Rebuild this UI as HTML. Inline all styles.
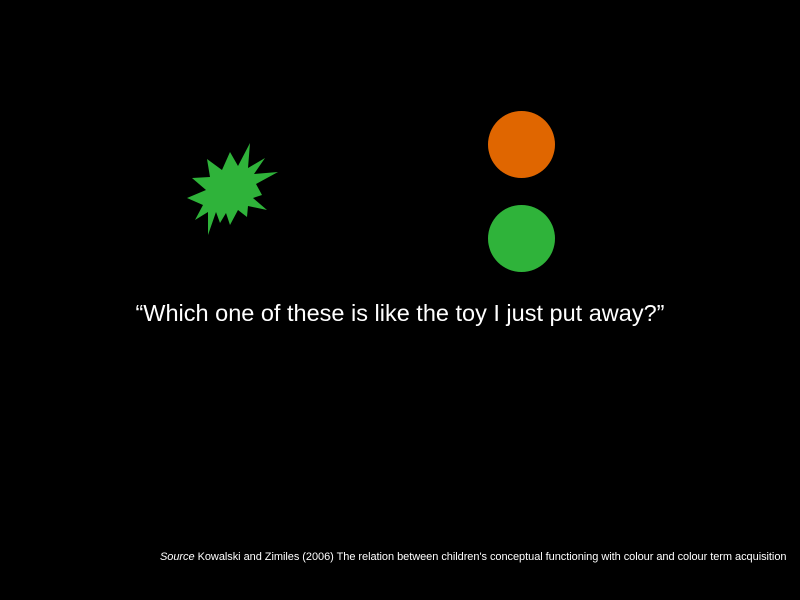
<!DOCTYPE html>
<html><head><style>
html,body{margin:0;padding:0;background:#000;width:800px;height:600px;overflow:hidden;position:relative;font-family:"Liberation Sans",sans-serif;}
.q{position:absolute;left:0;width:800px;top:300px;text-align:center;color:#fff;font-size:23.5px;white-space:nowrap;}
.s{position:absolute;left:160px;top:551px;color:#fff;font-size:11px;white-space:nowrap;letter-spacing:-0.05px;}
.c{position:absolute;width:67px;height:67px;border-radius:50%;}
</style></head><body>
<svg width="800" height="600" style="position:absolute;left:0;top:0">
<polygon fill="#2fb33a" points="230,152 238,166 250,143 248,168 265,158 254,174 278,172 256,184 262,195 253,198 267,210 248,206 247,217 238,210 230,225 226,213 220,223 216,212 208,235 208,212 195,220 203,205 187,198 206,190 192,178 210,177 207,159 222,170"/>
</svg>
<div class="c" style="left:488px;top:111px;background:#e06600"></div>
<div class="c" style="left:488px;top:205px;background:#2fb33a"></div>
<div class="q">“Which one of these is like the toy I just put away?”</div>
<div class="s"><i>Source</i> Kowalski and Zimiles (2006) The relation between children's conceptual functioning with colour and colour term acquisition</div>
</body></html>
